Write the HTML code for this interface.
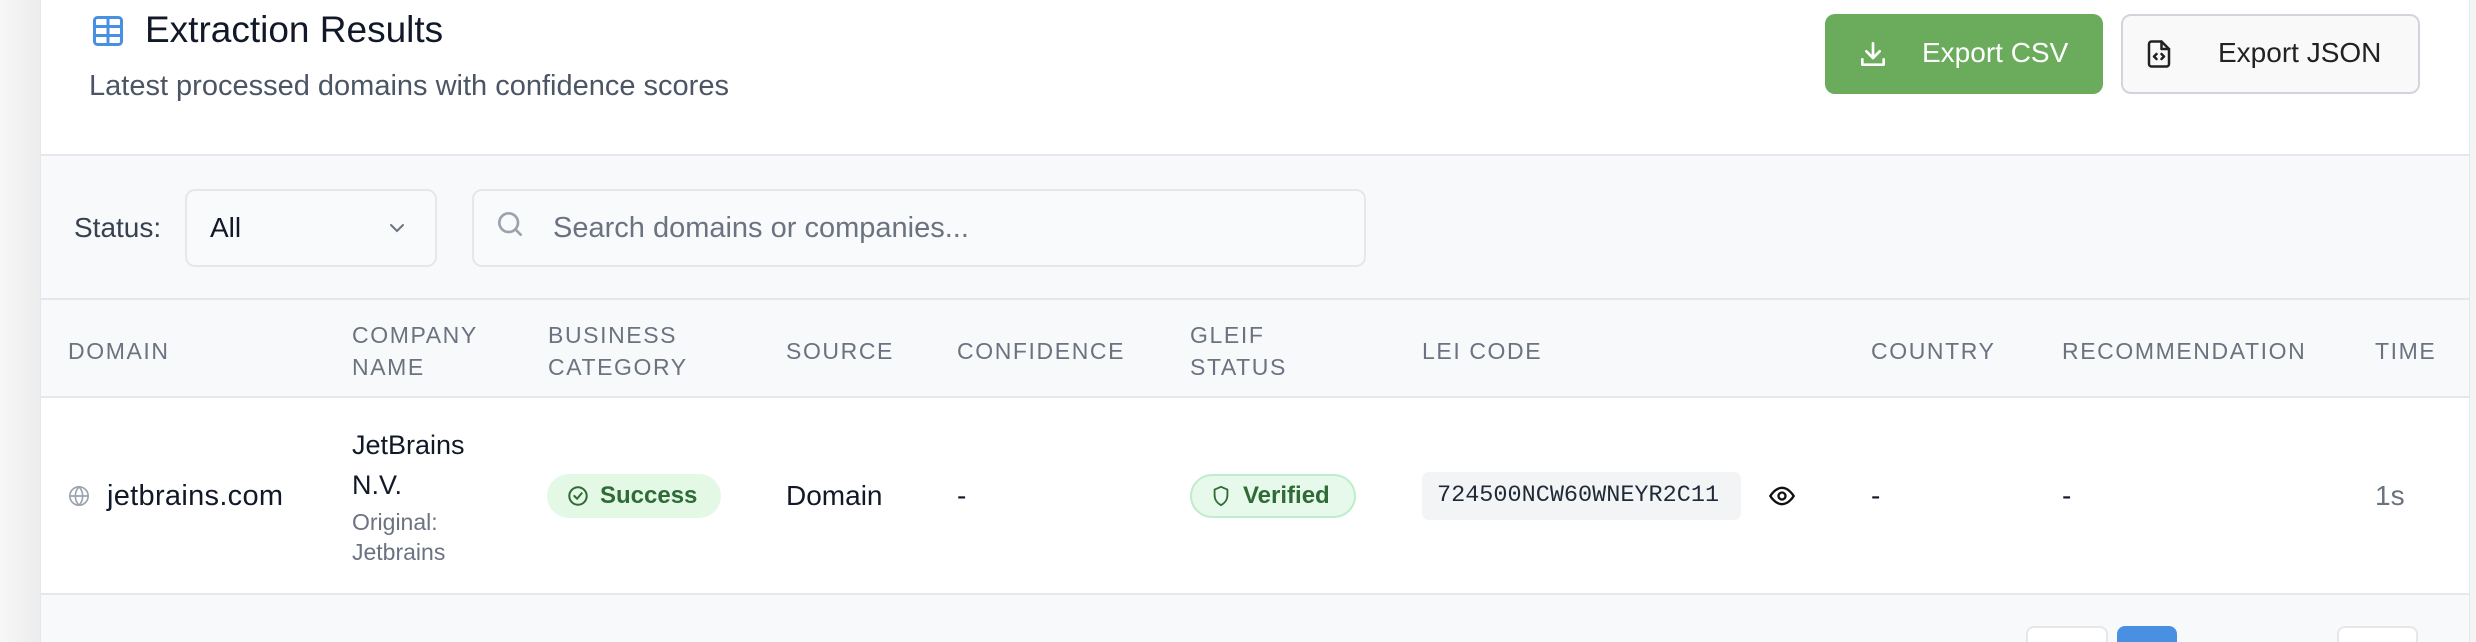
<!DOCTYPE html>
<html style="overflow:hidden"><head><meta charset="utf-8"><style>
*{margin:0;padding:0;box-sizing:border-box}
html,body{width:2476px;height:642px;overflow:hidden}
body{background:#f3f4f6;font-family:"Liberation Sans",sans-serif;position:relative;color:#111827}
.a{position:absolute}
.card{position:absolute;left:40px;top:0;width:2430px;height:642px;background:#fff;border-left:1px solid #e5e7eb;border-right:1px solid #e5e7eb}
.hd{font-size:23px;letter-spacing:1.6px;color:#6b7280;line-height:32px;text-transform:uppercase}
</style></head><body>
<div class="a" style="left:0;top:0;width:40px;height:642px;background:linear-gradient(90deg,#f7f7f7,#ececec)"></div>
<div class="card"></div>
<!-- header -->
<svg class="a" style="left:90px;top:13px" width="36" height="36" viewBox="0 0 24 24" fill="none" stroke="#4a90e2" stroke-width="2" stroke-linecap="round" stroke-linejoin="round"><rect x="3" y="3" width="18" height="18" rx="2"/><path d="M3 9h18M3 15h18M12 3v18"/></svg>
<div class="a" style="left:145px;top:8px;font-size:37px;line-height:44px;color:#111827">Extraction Results</div>
<div class="a" style="left:89px;top:68px;font-size:29px;line-height:36px;color:#4b5563">Latest processed domains with confidence scores</div>
<div class="a" style="left:1825px;top:14px;width:278px;height:80px;background:#6aab5c;border-radius:10px"></div>
<svg class="a" style="left:1857px;top:38px" width="32" height="32" viewBox="0 0 24 24" fill="none" stroke="#fff" stroke-width="2" stroke-linecap="round" stroke-linejoin="round"><path d="M12 4v11M7 10l5 5 5-5M4 16v4h16v-4"/></svg>
<div class="a" style="left:1922px;top:36px;font-size:28px;line-height:34px;color:#fff">Export CSV</div>
<div class="a" style="left:2121px;top:14px;width:299px;height:80px;background:#f9f9f9;border:2px solid #d1d5db;border-radius:10px"></div>
<svg class="a" style="left:2144px;top:37px" width="30" height="34" viewBox="0 0 24 24" fill="none" stroke="#222" stroke-width="2" stroke-linecap="round" stroke-linejoin="round"><path d="M14 2H6a2 2 0 0 0-2 2v16a2 2 0 0 0 2 2h12a2 2 0 0 0 2-2V8z"/><path d="M14 2v6h6M10 12l-2 2 2 2M14 12l2 2-2 2"/></svg>
<div class="a" style="left:2218px;top:36px;font-size:28px;line-height:34px;color:#222">Export JSON</div>
<!-- filter band -->
<div class="a" style="left:41px;top:154px;width:2428px;height:146px;background:#f8f9fa;border-top:2px solid #e5e7eb;border-bottom:2px solid #e5e7eb"></div>
<div class="a" style="left:74px;top:211px;font-size:28px;line-height:34px;color:#374151">Status:</div>
<div class="a" style="left:185px;top:189px;width:252px;height:78px;border:2px solid #e5e7eb;border-radius:10px;background:#f9fafb"></div>
<div class="a" style="left:210px;top:211px;font-size:28px;line-height:34px;color:#111827">All</div>
<svg class="a" style="left:385px;top:218px" width="24" height="20" viewBox="0 0 24 20" fill="none" stroke="#6b7280" stroke-width="2" stroke-linecap="round"><path d="M6 7l6 6 6-6"/></svg>
<div class="a" style="left:472px;top:189px;width:894px;height:78px;border:2px solid #e5e7eb;border-radius:10px;background:#f9fafb"></div>
<svg class="a" style="left:494px;top:208px" width="32" height="32" viewBox="0 0 24 24" fill="none" stroke="#9ca3af" stroke-width="2" stroke-linecap="round"><circle cx="11" cy="11" r="7"/><path d="M16 16l4 4"/></svg>
<div class="a" style="left:553px;top:211px;font-size:29px;line-height:34px;color:#6b7280">Search domains or companies...</div>
<!-- table header -->
<div class="a" style="left:41px;top:300px;width:2428px;height:98px;background:#f8f9fa;border-bottom:2px solid #e5e7eb"></div>
<div class="a hd" style="left:68px;top:335px">Domain</div>
<div class="a hd" style="left:352px;top:319px">Company<br>Name</div>
<div class="a hd" style="left:548px;top:319px">Business<br>Category</div>
<div class="a hd" style="left:786px;top:335px">Source</div>
<div class="a hd" style="left:957px;top:335px">Confidence</div>
<div class="a hd" style="left:1190px;top:319px">Gleif<br>Status</div>
<div class="a hd" style="left:1422px;top:335px">LEI Code</div>
<div class="a hd" style="left:1871px;top:335px">Country</div>
<div class="a hd" style="left:2062px;top:335px">Recommendation</div>
<div class="a hd" style="left:2375px;top:335px">Time</div>
<!-- row -->
<svg class="a" style="left:68px;top:485px" width="22" height="22" viewBox="0 0 24 24" fill="none" stroke="#9ca3af" stroke-width="1.8"><circle cx="12" cy="12" r="10"/><path d="M2 12h20M12 2c3 3 4 6.5 4 10s-1 7-4 10c-3-3-4-6.5-4-10s1-7 4-10z"/></svg>
<div class="a" style="left:107px;top:479px;font-size:29px;line-height:34px;color:#111827;font-weight:500;letter-spacing:0.3px">jetbrains.com</div>
<div class="a" style="left:352px;top:425px;font-size:27px;line-height:40px;color:#111827">JetBrains<br>N.V.</div>
<div class="a" style="left:352px;top:507px;font-size:23px;line-height:30px;color:#6b7280">Original:<br>Jetbrains</div>
<div class="a" style="left:547px;top:474px;width:174px;height:44px;border-radius:22px;background:#e3f9e5"></div>
<svg class="a" style="left:567px;top:485px" width="22" height="22" viewBox="0 0 24 24" fill="none" stroke="#2f6b36" stroke-width="2.2" stroke-linecap="round" stroke-linejoin="round"><circle cx="12" cy="12" r="9.5"/><path d="M8 12l3 3 5-6"/></svg>
<div class="a" style="left:600px;top:482px;font-size:24px;line-height:28px;font-weight:bold;color:#2f6b36">Success</div>
<div class="a" style="left:786px;top:479px;font-size:28px;line-height:34px;color:#111827">Domain</div>
<div class="a" style="left:957px;top:479px;font-size:28px;line-height:34px">-</div>
<div class="a" style="left:1190px;top:474px;width:166px;height:44px;border-radius:22px;background:#e6f9ea;border:2px solid #bfeccb"></div>
<svg class="a" style="left:1211px;top:485px" width="20" height="22" viewBox="0 0 20 24" fill="none" stroke="#2f6b36" stroke-width="2" stroke-linejoin="round"><path d="M10 2l7 3v6c0 5-3 9-7 11-4-2-7-6-7-11V5z"/></svg>
<div class="a" style="left:1243px;top:482px;font-size:24px;line-height:28px;font-weight:bold;color:#2f6b36">Verified</div>
<div class="a" style="left:1422px;top:472px;width:319px;height:48px;border-radius:7px;background:#f3f4f6"></div>
<div class="a" style="left:1437px;top:482px;font-family:'Liberation Mono',monospace;font-size:23.5px;line-height:28px;color:#1f2937">724500NCW60WNEYR2C11</div>
<svg class="a" style="left:1767px;top:482px" width="30" height="28" viewBox="0 0 24 24" fill="none" stroke="#111" stroke-width="2"><path d="M2 12s4-7 10-7 10 7 10 7-4 7-10 7S2 12 2 12z"/><circle cx="12" cy="12" r="3"/></svg>
<div class="a" style="left:1871px;top:479px;font-size:28px;line-height:34px">-</div>
<div class="a" style="left:2062px;top:479px;font-size:28px;line-height:34px">-</div>
<div class="a" style="left:2375px;top:479px;font-size:28px;line-height:34px;color:#6b7280">1s</div>
<!-- footer -->
<div class="a" style="left:41px;top:593px;width:2428px;height:49px;background:#f8f9fa;border-top:2px solid #e5e7eb"></div>
<div class="a" style="left:2026px;top:626px;width:82px;height:16px;border:2px solid #e5e7eb;border-bottom:none;border-radius:8px 8px 0 0;background:#fff"></div>
<div class="a" style="left:2117px;top:626px;width:60px;height:16px;border-radius:8px 8px 0 0;background:#4a90e2"></div>
<div class="a" style="left:2337px;top:626px;width:81px;height:16px;border:2px solid #e5e7eb;border-bottom:none;border-radius:8px 8px 0 0;background:#fff"></div>
</body></html>
